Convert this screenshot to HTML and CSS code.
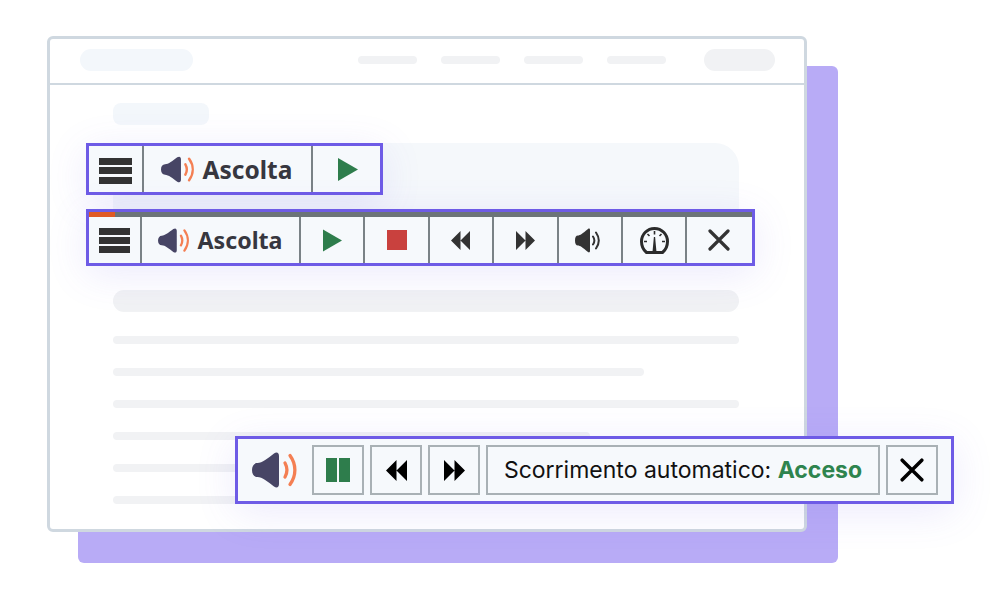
FILE: index.html
```html
<!DOCTYPE html>
<html lang="it">
	<head>
		<meta charset="utf-8">
		<meta name="viewport" content="width=device-width, initial-scale=1.0">
		<title>Ascolta</title>
		<link rel="stylesheet" href="styles.css">
	</head>
	<body>
		<svg class="defs" width="0" height="0">
			<symbol id="speaker" viewBox="0 0 46 36">
				<path d="M5.500 11C10 11 16 6 22 1.500 25-.5 27 1 27 4v28c0 3-2 4.500-5 2.500C16 30 10 25 5.500 25 2 25 0 22 0 18s2-7 5.500-7z" fill="#474565"/>
				<path d="M33 11c2.500 4.500 2.500 9.500 0 14M38 3.500c6.500 9 6.500 20 0 29" fill="none" stroke="#f47f53" stroke-width="3.300" stroke-linecap="round"/>
			</symbol>
			<symbol id="play" viewBox="0 0 20 23">
				<path d="M0 0l20 11.500L0 23z" fill="#2e7d4c"/>
			</symbol>
			<symbol id="rewind" viewBox="0 0 20 20">
				<path d="M10 0v20L0 10zM20 0v20L10 10z"/>
			</symbol>
			<symbol id="forward" viewBox="0 0 20 20">
				<path d="M0 0v20l10-10zM10 0v20l10-10z"/>
			</symbol>
			<symbol id="cross" viewBox="0 0 22 22">
				<path d="M2 2l18 18M20 2L2 20" fill="none" stroke="currentColor" stroke-width="3.200" stroke-linecap="round"/>
			</symbol>
		</svg>

		<div class="stage">
			<div class="backdrop"></div>

			<div class="window">
				<div class="topbar">
					<span class="pill logo"></span>
					<div class="nav">
						<span class="pill link"></span>
						<span class="pill link"></span>
						<span class="pill link"></span>
						<span class="pill link"></span>
					</div>
					<span class="pill login"></span>
				</div>
				<div class="content">
					<span class="pill crumb"></span>
					<div class="hero"></div>
					<span class="pill heading"></span>
					<div class="lines">
						<span class="pill line"></span>
						<span class="pill line short"></span>
						<span class="pill line"></span>
						<span class="pill line shorter"></span>
						<span class="pill line"></span>
						<span class="pill line"></span>
					</div>
				</div>
			</div>

			<div class="player small">
				<div class="cell menu-cell">
					<div class="burger"><i></i><i></i><i></i></div>
				</div>
				<div class="cell listen-cell">
					<svg class="speaker"><use href="#speaker"/></svg>
					<span class="listen">Ascolta</span>
				</div>
				<div class="cell play-cell">
					<svg class="play"><use href="#play"/></svg>
				</div>
			</div>

			<div class="player wide">
				<div class="progress"><div class="progress-fill"></div></div>
				<div class="row">
					<div class="cell menu-cell">
						<div class="burger"><i></i><i></i><i></i></div>
					</div>
					<div class="cell listen-cell">
						<svg class="speaker"><use href="#speaker"/></svg>
						<span class="listen">Ascolta</span>
					</div>
					<div class="cell btn-cell">
						<svg class="play"><use href="#play"/></svg>
					</div>
					<div class="cell btn-cell"><div class="stop"></div></div>
					<div class="cell btn-cell"><svg class="skip"><use href="#rewind"/></svg></div>
					<div class="cell btn-cell"><svg class="skip"><use href="#forward"/></svg></div>
					<div class="cell btn-cell">
						<svg class="volume" viewBox="0 0 25 25">
							<path d="M3 7.500c2 0 4.500-2 10-6.500 1-.8 2-.3 2 1v21c0 1.300-1 1.800-2 1-5.500-4.500-8-6.500-10-6.500-2 0-3-1.500-3-5s1-5 3-5z" fill="#333"/>
							<path d="M18 8.500c1.800 2.600 1.800 5.400 0 8M21 4.500c3.500 5 3.500 11 0 16" fill="none" stroke="#333" stroke-width="2" stroke-linecap="round"/>
						</svg>
					</div>
					<div class="cell btn-cell">
						<svg class="gauge" viewBox="0 0 29 27">
							<path d="M6.500 25.500C3.500 23 1.500 19 1.500 14.500a13 13 0 0 1 26 0c0 4.500-2 8.500-5 11z" fill="none" stroke="#2b2b2b" stroke-width="3" stroke-linejoin="round"/>
							<path d="M12.500 25l1.400-15h1.200l1.400 15z" fill="#2b2b2b"/>
							<path d="M14.500 4v3.500M7.500 7l2 2M21.500 7l-2 2M4 14.500h3M25 14.500h-3" fill="none" stroke="#2b2b2b" stroke-width="1.600"/>
						</svg>
					</div>
					<div class="cell btn-cell close-cell"><svg class="cross"><use href="#cross"/></svg></div>
				</div>
			</div>

			<div class="player auto">
				<svg class="speaker"><use href="#speaker"/></svg>
				<div class="box square">
					<div class="pause"><i></i><i></i></div>
				</div>
				<div class="box square"><svg class="skip"><use href="#rewind"/></svg></div>
				<div class="box square"><svg class="skip"><use href="#forward"/></svg></div>
				<div class="box status">Scorrimento automatico:&nbsp;<b>Acceso</b></div>
				<div class="box square"><svg class="cross"><use href="#cross"/></svg></div>
			</div>
		</div>
	</body>
</html>
```

FILE: styles.css
```css
body {
	margin: 0;
	background: #fff;
	font-family: "Inter", "Liberation Sans", sans-serif;
}

.defs {
	position: absolute;
}

.stage {
	position: relative;
	width: 990px;
	height: 602px;
	overflow: hidden;
}

.backdrop {
	position: absolute;
	left: 78px;
	top: 66px;
	width: 760px;
	height: 497px;
	background: #b8abf6;
	border-radius: 6px;
}

.window {
	position: absolute;
	left: 47px;
	top: 36px;
	width: 760px;
	height: 496px;
	box-sizing: border-box;
	background: #fff;
	border: 3px solid #cfd8e0;
	border-radius: 6px;
	overflow: hidden;
}

.pill {
	display: block;
	background: #f1f2f4;
	border-radius: 12px;
}

.topbar {
	display: flex;
	align-items: center;
	height: 42px;
	padding: 0 29px 2px 30px;
	border-bottom: 2px solid #cfd8e0;
}

.logo {
	width: 113px;
	height: 22px;
	background: #f3f7fb;
}

.nav {
	display: flex;
	gap: 24px;
	margin-left: 165px;
}

.link {
	width: 59px;
	height: 8px;
}

.login {
	width: 71px;
	height: 22px;
	margin-left: 38px;
}

.content {
	padding: 18px 65px 0 63px;
}

.crumb {
	width: 96px;
	height: 22px;
	background: #f3f7fb;
	border-radius: 8px;
}

.hero {
	height: 100px;
	margin-top: 18px;
	background: #f5f8fb;
	border-radius: 24px;
}

.heading {
	height: 22px;
	margin-top: 47px;
}

.lines {
	display: flex;
	flex-direction: column;
	gap: 24px;
	margin-top: 24px;
}

.line {
	height: 8px;
}

.line.short {
	width: 531px;
}

.line.shorter {
	width: 477px;
}

.player {
	position: absolute;
	box-sizing: border-box;
	background: #f6f9fc;
	border: 3px solid #6e5be6;
	box-shadow: 0 8px 40px rgba(110, 91, 230, 0.13);
}

.player.small {
	display: flex;
	left: 86px;
	top: 143px;
	width: 297px;
	height: 52px;
}

.player.wide {
	left: 86px;
	top: 209px;
	width: 669px;
	height: 57px;
}

.player.auto {
	display: flex;
	align-items: center;
	gap: 6px;
	left: 235px;
	top: 436px;
	width: 719px;
	height: 68px;
	padding: 0 13px 0 14px;
}

.progress {
	height: 5px;
	background: #6c7478;
}

.progress-fill {
	width: 26px;
	height: 100%;
	background: #e05a24;
}

.row {
	display: flex;
	height: 46px;
}

.cell {
	display: flex;
	align-items: center;
	justify-content: center;
	flex: none;
	box-sizing: border-box;
	border-right: 2px solid #7a8286;
}

.cell:last-child {
	border-right: none;
}

.burger {
	display: flex;
	flex-direction: column;
	gap: 2.500px;
}

.burger i {
	display: block;
	height: 7px;
	background: #333;
}

.listen {
	font-family: "Noto Sans", "Open Sans", sans-serif;
	font-weight: 700;
	color: #37373f;
}

.speaker {
	flex: none;
}

.small .menu-cell {
	width: 55px;
}

.small .burger {
	width: 33px;
	margin-top: 3px;
}

.small .listen-cell {
	width: 169px;
	gap: 8px;
	padding-right: 2px;
}

.small .speaker {
	width: 34px;
	height: 27px;
}

.small .listen {
	font-size: 24.500px;
}

.small .play-cell {
	flex: 1;
	padding-left: 2px;
}

.small .play {
	width: 20px;
	height: 23px;
}

.wide .menu-cell {
	width: 53px;
}

.wide .burger {
	width: 31px;
	gap: 2px;
}

.wide .listen-cell {
	width: 159px;
	gap: 7px;
}

.wide .speaker {
	width: 32px;
	height: 25px;
}

.wide .listen {
	font-size: 23.200px;
}

.wide .btn-cell {
	width: 64.400px;
	color: #333;
	fill: #333;
}

.wide .play {
	width: 19px;
	height: 23px;
}

.wide .close-cell {
	flex: 1;
	padding-right: 2px;
}

.stop {
	width: 20px;
	height: 20px;
	background: #c9413e;
}

.wide .skip {
	width: 19px;
	height: 19px;
}

.volume {
	width: 25px;
	height: 25px;
	margin-right: 5px;
}

.gauge {
	width: 29px;
	height: 27px;
}

.wide .cross {
	width: 22px;
	height: 22px;
}

.auto .speaker {
	width: 46px;
	height: 36px;
	margin-right: 8px;
}

.box {
	display: flex;
	align-items: center;
	justify-content: center;
	box-sizing: border-box;
	flex: none;
	height: 50px;
	border: 2px solid #a9b1b5;
	color: #111;
}

.square {
	width: 52px;
}

.status {
	width: 394px;
	font-size: 23px;
	white-space: nowrap;
}

.status b {
	color: #2e844e;
	font-weight: 700;
}

.pause {
	display: flex;
	gap: 2px;
}

.pause i {
	display: block;
	width: 11px;
	height: 24px;
	background: #2e7d4c;
}

.auto .skip {
	width: 21px;
	height: 21px;
	fill: #000;
}

.auto .cross {
	width: 24px;
	height: 24px;
	color: #000;
}
```
